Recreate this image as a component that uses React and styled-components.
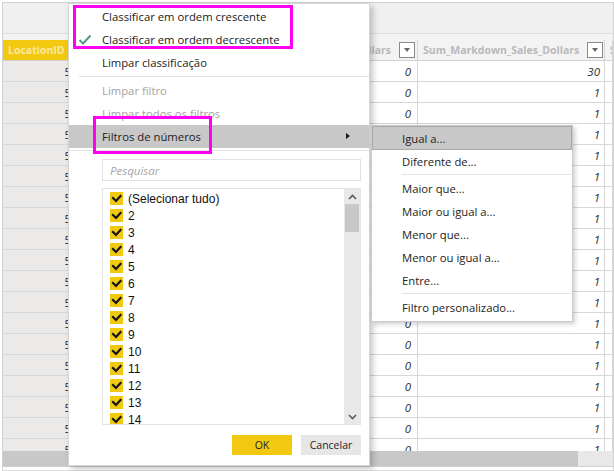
import React from "react";
import styled, { createGlobalStyle } from "styled-components";

const Global = createGlobalStyle`
  html, body { margin: 0; padding: 0; background: #fff; }
  body { width: 614px; height: 471px; overflow: hidden; font-family: "Open Sans", sans-serif; }
  * { box-sizing: border-box; }
`;

const Frame = styled.div`
  position: relative;
  width: 614px;
  height: 471px;
  background: #fff;
  padding: 2px 0 0 2px;
  overflow: hidden;
`;

const Screen = styled.div`
  display: flex;
  flex-direction: column;
  height: 469px;
  border-top: 1px solid #d2d2d2;
  border-left: 1px solid #d2d2d2;
  border-right: 1px solid #d2d2d2;
`;

const Toolbar = styled.div`
  height: 31px;
  flex: none;
  background: #f0f0f0;
  border-bottom: 1px solid #dcdcdc;
`;

const Band = styled.div`
  height: 6px;
  flex: none;
  background: #f3f3f3;
`;

const Table = styled.div`
  flex: 1;
  min-height: 0;
  overflow: hidden;
  display: grid;
  grid-template-columns: 71px 344px 187px 1fr;
  grid-auto-rows: 21px;
  align-content: start;
  background: #fff;
`;

const HeadCell = styled.div`
  display: flex;
  align-items: center;
  justify-content: ${(p) => (p.$end ? "flex-end" : "flex-start")};
  gap: 8px;
  padding: 0 2px 0 5px;
  background: ${(p) => (p.$active ? "#f2c811" : "#f3f3f3")};
  border-right: 1px solid ${(p) => (p.$active ? "#f2c811" : "#d6d6d6")};
  border-bottom: 1px solid #d2d2d2;
  overflow: hidden;
  white-space: nowrap;
`;

const HeadLabel = styled.span`
  font-family: "Open Sans", sans-serif;
  font-weight: 700;
  font-size: 10.5px;
  color: ${(p) => (p.$light ? "rgba(255,255,255,0.6)" : "#b9b9b9")};
  flex: ${(p) => (p.$grow ? "1" : "none")};
`;

const DropBtn = styled.span`
  flex: none;
  width: 16px;
  height: 16px;
  border: 1px solid #8a8a8a;
  background: #fff;
  display: flex;
  align-items: center;
  justify-content: center;
  &::after {
    content: "";
    border-left: 3.5px solid transparent;
    border-right: 3.5px solid transparent;
    border-top: 4px solid #666;
  }
`;

const Cell = styled.div`
  display: flex;
  align-items: center;
  justify-content: flex-end;
  padding-right: ${(p) => p.$pr || 4}px;
  background: ${(p) => (p.$gray ? "#ebeae8" : "#fff")};
  border-right: 1px solid #d6d6d6;
  border-bottom: 1px solid #d8d8d8;
  font-family: "Open Sans", sans-serif;
  font-style: ${(p) => (p.$gray ? "normal" : "italic")};
  font-size: 11.5px;
  color: #2c2c2c;
  overflow: hidden;
`;

const HScroll = styled.div`
  height: 15px;
  flex: none;
  display: flex;
  background: #e8e8e8;
`;

const HThumb = styled.div`
  width: 575px;
  background: #c8c8c8;
`;

const BottomStrip = styled.div`
  height: 5px;
  flex: none;
  border-top: 1px solid #cfcfcf;
  border-bottom: 1px solid #dcdcdc;
  background: #fff;
`;

/* ---------- main menu ---------- */

const Menu = styled.div`
  position: absolute;
  left: 68px;
  top: 3px;
  width: 302px;
  height: 463px;
  background: #fff;
  border: 1px solid #d5d5d5;
  box-shadow: 3px 3px 6px rgba(0, 0, 0, 0.22);
  padding-top: 1px;
  display: flex;
  flex-direction: column;
`;

const Item = styled.div`
  position: relative;
  height: ${(p) => p.$h || 23}px;
  flex: none;
  display: flex;
  align-items: center;
  padding-left: ${(p) => p.$pl || 33}px;
  font-family: "Open Sans", sans-serif;
  font-size: 11.3px;
  color: ${(p) => (p.$disabled ? "#a3a3a3" : "#222")};
  background: ${(p) => (p.$hover ? "#c8c8c8" : "transparent")};
  box-shadow: ${(p) => (p.$outline ? "inset 0 0 0 1px #a9a9a9" : "none")};
  white-space: nowrap;
`;

const Check = styled.svg`
  position: absolute;
  left: 9px;
  top: 6px;
`;

const SubArrow = styled.span`
  position: absolute;
  right: 19px;
  top: 8px;
  border-left: 4px solid #1e1e1e;
  border-top: 3.5px solid transparent;
  border-bottom: 3.5px solid transparent;
`;

const Sep = styled.div`
  flex: none;
  height: 1px;
  background: #e2e2e2;
  margin: ${(p) => p.$m || "2px 0 1px 10px"};
`;

const Search = styled.div`
  flex: none;
  height: 22px;
  margin: 7px 8px 0 33px;
  border: 1px solid #e1e1e1;
  display: flex;
  align-items: center;
  padding-left: 7px;
  font-family: "Open Sans", sans-serif;
  font-style: italic;
  font-size: 11.5px;
  color: #a6a6a6;
`;

const ListBox = styled.div`
  flex: none;
  height: 237px;
  margin: 7px 8px 0 33px;
  border: 1px solid #e3e3e3;
  display: flex;
  overflow: hidden;
`;

const ListItems = styled.div`
  flex: 1;
  padding: 1px 0 0 7px;
  display: flex;
  flex-direction: column;
  overflow: hidden;
`;

const ListRow = styled.div`
  height: 17px;
  flex: none;
  display: flex;
  align-items: center;
  gap: 5px;
  font-family: "Liberation Sans", Arial, sans-serif;
  font-size: 12px;
  color: #111;
`;

const Box = styled.span`
  width: 13px;
  height: 13px;
  flex: none;
  background: #f2c811;
  display: flex;
  align-items: center;
  justify-content: center;
`;

const VScroll = styled.div`
  width: 16px;
  flex: none;
  background: #e8e8e8;
  display: flex;
  flex-direction: column;
  align-items: center;
`;

const ScrollArrow = styled.div`
  height: 15px;
  flex: none;
  display: flex;
  align-items: center;
  justify-content: center;
`;

const VThumb = styled.div`
  width: 14px;
  height: 28px;
  flex: none;
  background: #c8c8c8;
`;

const ScrollGap = styled.div`
  flex: 1;
`;

const Buttons = styled.div`
  flex: none;
  display: flex;
  justify-content: flex-end;
  gap: 9px;
  margin: 10px 8px 0 0;
`;

const Btn = styled.div`
  width: 60px;
  height: 20px;
  display: flex;
  align-items: center;
  justify-content: center;
  font-family: "Open Sans", sans-serif;
  font-size: 10.5px;
  color: #252525;
  background: ${(p) => (p.$primary ? "#f2c811" : "#e6e6e6")};
`;

/* ---------- submenu ---------- */

const SubMenu = styled.div`
  position: absolute;
  left: 371px;
  top: 125px;
  width: 202px;
  height: 197px;
  background: #fff;
  border: 1px solid #c9c9c9;
  box-shadow: 2px 2px 5px rgba(0, 0, 0, 0.2);
  display: flex;
  flex-direction: column;
`;

/* ---------- annotation boxes ---------- */

const Mark = styled.div`
  position: absolute;
  left: ${(p) => p.$x}px;
  top: ${(p) => p.$y}px;
  width: ${(p) => p.$w}px;
  height: ${(p) => p.$h}px;
  border: 3px solid #ff00f2;
  pointer-events: none;
`;

const CheckGlyph = () => (
  <svg width="11" height="11" viewBox="0 0 11 11">
    <polyline points="2,5 5,8 9.5,3" fill="none" stroke="#141414" strokeWidth="2.2" strokeLinecap="square" />
  </svg>
);

const Chevron = ({ up }) => (
  <svg width="9" height="6" viewBox="0 0 9 6">
    <polyline
      points={up ? "1,5 4.5,1.5 8,5" : "1,1 4.5,4.5 8,1"}
      fill="none"
      stroke="#5a5a5a"
      strokeWidth="1.6"
    />
  </svg>
);

const listValues = ["(Selecionar tudo)", "2", "3", "4", "5", "6", "7", "8", "9", "10", "11", "12", "13", "14"];
const subItems1 = ["Diferente de..."];
const subItems2 = ["Maior que...", "Maior ou igual a...", "Menor que...", "Menor ou igual a...", "Entre..."];

export default function App() {
  const rows = Array.from({ length: 19 }, (_, i) => i);
  return (
    <>
      <Global />
      <Frame>
        <Screen>
          <Toolbar />
          <Band />
          <Table>
            <HeadCell $active>
              <HeadLabel $light>LocationID</HeadLabel>
            </HeadCell>
            <HeadCell $end>
              <HeadLabel>Sum_Regular_Sales_Dollars</HeadLabel>
              <DropBtn />
            </HeadCell>
            <HeadCell>
              <HeadLabel $grow>Sum_Markdown_Sales_Dollars</HeadLabel>
              <DropBtn />
            </HeadCell>
            <HeadCell>
              <HeadLabel>Sum</HeadLabel>
            </HeadCell>
            {rows.map((i) => (
              <React.Fragment key={i}>
                <Cell $gray $pr={2}>5</Cell>
                <Cell $pr={6}>0</Cell>
                <Cell $pr={4}>{i === 0 ? "30" : "1"}</Cell>
                <Cell />
              </React.Fragment>
            ))}
          </Table>
          <HScroll>
            <HThumb />
          </HScroll>
          <BottomStrip />
        </Screen>

        <Menu>
          <Item>Classificar em ordem crescente</Item>
          <Item>
            <Check width="14" height="12" viewBox="0 0 14 12">
              <polyline points="1.5,6 5,9.5 12.5,1.5" fill="none" stroke="#4f9a86" strokeWidth="2" />
            </Check>
            Classificar em ordem decrescente
          </Item>
          <Item>Limpar classificação</Item>
          <Sep $m="2px 0 2px 10px" />
          <Item $disabled>Limpar filtro</Item>
          <Item $disabled>Limpar todos os filtros</Item>
          <Item $hover>
            Filtros de números
            <SubArrow />
          </Item>
          <Sep $m="2px 0 1px 0" />
          <Search>Pesquisar</Search>
          <ListBox>
            <ListItems>
              {listValues.map((v) => (
                <ListRow key={v}>
                  <Box>
                    <CheckGlyph />
                  </Box>
                  {v}
                </ListRow>
              ))}
            </ListItems>
            <VScroll>
              <ScrollArrow>
                <Chevron up />
              </ScrollArrow>
              <VThumb />
              <ScrollGap />
              <ScrollArrow>
                <Chevron />
              </ScrollArrow>
            </VScroll>
          </ListBox>
          <Buttons>
            <Btn $primary>OK</Btn>
            <Btn>Cancelar</Btn>
          </Buttons>
        </Menu>

        <SubMenu>
          <Item $hover $outline $h={24} $pl={30}>Igual a...</Item>
          {subItems1.map((t) => (
            <Item key={t} $pl={30}>{t}</Item>
          ))}
          <Sep $m="1px 1px 2px 30px" />
          {subItems2.map((t) => (
            <Item key={t} $pl={30}>{t}</Item>
          ))}
          <Sep $m="1px 1px 2px 30px" />
          <Item $pl={30}>Filtro personalizado...</Item>
        </SubMenu>

        <Mark $x={73} $y={5} $w={220} $h={44} />
        <Mark $x={93} $y={116} $w={119} $h={38} />
      </Frame>
    </>
  );
}
